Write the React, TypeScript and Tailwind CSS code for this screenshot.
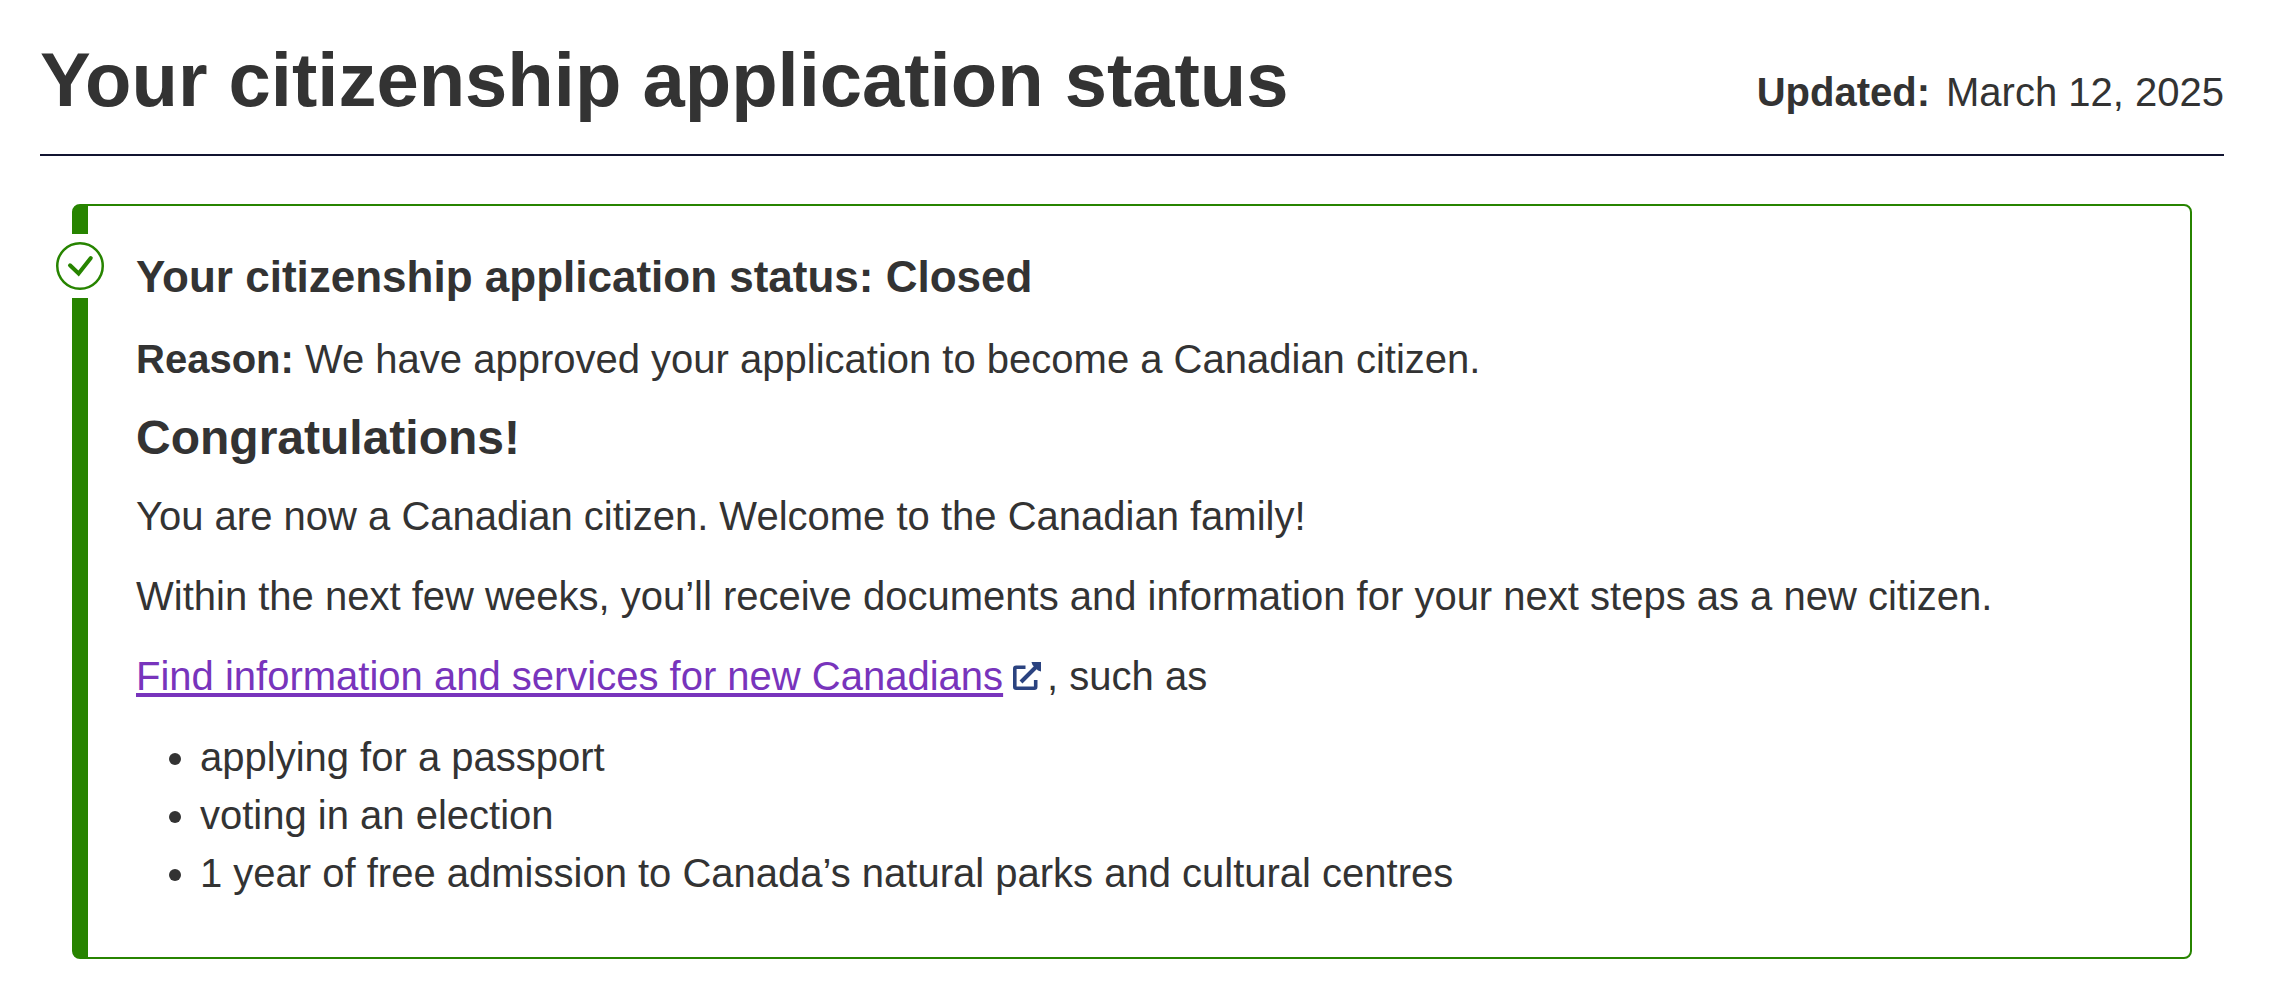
const benefits = [
  'applying for a passport',
  'voting in an election',
  '1 year of free admission to Canada’s natural parks and cultural centres',
];

function CheckCircleIcon() {
  return (
    <svg viewBox="0 0 48 48" className="size-12" fill="none" stroke="#278400" aria-hidden="true">
      <circle cx="24" cy="24" r="22.75" strokeWidth="2.5" />
      <path d="M14 23.3 22.6 31.5 34.8 16" strokeWidth="4" strokeLinecap="round" />
    </svg>
  );
}

function ExternalLinkIcon() {
  return (
    <svg viewBox="0 0 28 28" className="inline-block size-7 align-baseline" fill="none" stroke="#2b4380" aria-hidden="true">
      <path d="M12.5 5.3H3.2Q1.8 5.3 1.8 6.7V24.8Q1.8 26.2 3.2 26.2H21.3Q22.7 26.2 22.7 24.8V18" strokeWidth="3.6" />
      <path d="M8 20 23 5" strokeWidth="4" />
      <path d="M18.5 0H28V9.5L25 8.5 19.5 3Z" fill="#2b4380" stroke="none" />
    </svg>
  );
}

function StatusCard() {
  return (
    <section className="relative mx-8 mt-12 rounded-lg border-2 border-l-16 border-[#278400] px-12 pb-[55px] pt-[45px]">
      {/* Badge that interrupts the left border */}
      <div className="absolute -left-10 top-7 flex h-16 items-center bg-white px-2">
        <CheckCircleIcon />
      </div>

      <h2 className="text-[44px] font-bold leading-[52px]">Your citizenship application status: Closed</h2>
      <p className="mt-7">
        <strong>Reason:</strong> We have approved your application to become a Canadian citizen.
      </p>
      <div className="mt-[23px] flex flex-col gap-[23px]">
        <h3 className="text-5xl font-bold leading-[54px]">Congratulations!</h3>
        <p>You are now a Canadian citizen. Welcome to the Canadian family!</p>
        <p>Within the next few weeks, you’ll receive documents and information for your next steps as a new citizen.</p>
        <p>
          <a href="#services" className="text-[#7834bc] underline decoration-4 underline-offset-3">
            Find information and services for new Canadians
          </a>
          <span className="ml-2.5 mr-1.5">
            <ExternalLinkIcon />
          </span>
          , such as
        </p>
        <ul className="list-disc pl-16 leading-[58px]">
          {benefits.map((item) => (
            <li key={item}>{item}</li>
          ))}
        </ul>
      </div>
    </section>
  );
}

export default function App() {
  return (
    <main className="bg-white pb-7 pl-10 pr-[60px] pt-[38px] font-['Liberation_Sans',Arial,sans-serif] text-[40px] leading-[57px] text-[#333333]">
      <header className="flex items-baseline justify-between border-b-2 border-[#111430] pb-8">
        <h1 className="text-[76px] font-bold leading-[84px]">Your citizenship application status</h1>
        <p className="flex gap-4">
          <strong>Updated:</strong>
          <span>March 12, 2025</span>
        </p>
      </header>
      <StatusCard />
    </main>
  );
}
